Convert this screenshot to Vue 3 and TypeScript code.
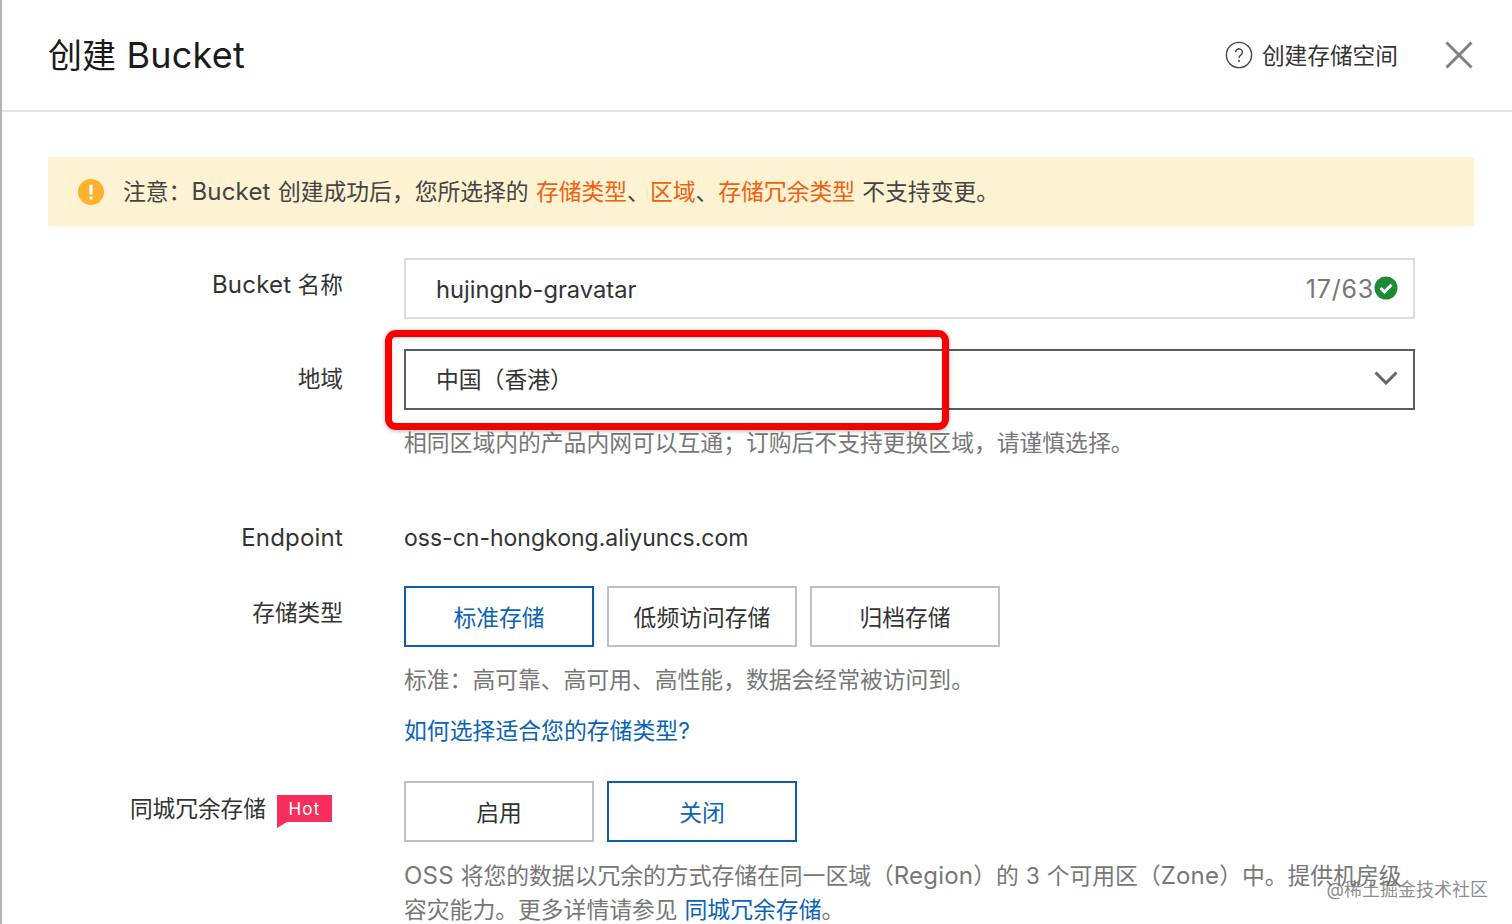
<script setup lang="ts">
const storageTypes = [
  { label: '标准存储', active: true },
  { label: '低频访问存储', active: false },
  { label: '归档存储', active: false },
]
const redundancy = [
  { label: '启用', active: false },
  { label: '关闭', active: true },
]
</script>

<template>
  <div class="page">
    <header class="head">
      <h1 class="title">创建 <span class="title-lat">Bucket</span></h1>
      <div class="head-actions">
        <a class="help">
          <svg class="help-icon" viewBox="0 0 28 28" width="28" height="28">
            <circle cx="14" cy="14" r="12.6" fill="none" stroke="#444" stroke-width="1.4" />
            <path d="M10.6 11.2a3.4 3.4 0 1 1 5.2 2.9c-1.2.8-1.8 1.4-1.8 2.9" fill="none" stroke="#444" stroke-width="1.4" />
            <circle cx="14" cy="20" r="1" fill="#444" />
          </svg>
          <span class="help-text">创建存储空间</span>
        </a>
        <svg class="close" viewBox="0 0 28 28" width="28" height="28">
          <path d="M1.5 1.5 26.5 26.5M26.5 1.5 1.5 26.5" stroke="#808080" stroke-width="3" fill="none" />
        </svg>
      </div>
    </header>

    <section class="body">
      <div class="alert">
        <svg class="alert-icon" viewBox="0 0 26 26" width="26" height="26">
          <circle cx="13" cy="13" r="13" fill="#ffb02e" />
          <rect x="11.4" y="5.5" width="3.2" height="10" rx="1.2" fill="#fff" />
          <circle cx="13" cy="19" r="1.8" fill="#fff" />
        </svg>
        <p class="alert-text">注意：<span class="lat">Bucket</span> 创建成功后，您所选择的 <em>存储类型</em>、<em>区域</em>、<em>存储冗余类型</em> 不支持变更。</p>
      </div>

      <div class="row row-name">
        <label class="label"><span class="lat">Bucket</span> 名称</label>
        <div class="input">
          <span class="value">hujingnb-gravatar</span>
          <span class="count">17/63</span>
          <svg class="ok" viewBox="0 0 24 24" width="24" height="24">
            <circle cx="12" cy="12" r="11.5" fill="#1e8a36" />
            <path d="M6.5 12.2 10.5 16 17.5 8.8" fill="none" stroke="#fff" stroke-width="3" />
          </svg>
        </div>
      </div>

      <div class="row row-region">
        <label class="label">地域</label>
        <div class="region-col">
          <div class="select">
            <span class="select-value">中国（香港）</span>
            <svg class="chev" viewBox="0 0 24 14" width="24" height="14">
              <path d="M1.5 1.5 12 12 22.5 1.5" fill="none" stroke="#666" stroke-width="3" />
            </svg>
          </div>
          <p class="hint hint-region">相同区域内的产品内网可以互通；订购后不支持更换区域，请谨慎选择。</p>
        </div>
      </div>

      <div class="row row-endpoint">
        <label class="label"><span class="lat">Endpoint</span></label>
        <div class="endpoint">oss-cn-hongkong.aliyuncs.com</div>
      </div>

      <div class="row row-type">
        <label class="label">存储类型</label>
        <div>
          <div class="options">
            <button v-for="o in storageTypes" :key="o.label" class="opt" :class="{ on: o.active }">{{ o.label }}</button>
          </div>
          <p class="hint hint-type">标准：高可靠、高可用、高性能，数据会经常被访问到。</p>
          <a class="link">如何选择适合您的存储类型?</a>
        </div>
      </div>

      <div class="row row-redundancy">
        <label class="label label-hot">同城冗余存储<span class="hot">Hot</span></label>
        <div>
          <div class="options">
            <button v-for="o in redundancy" :key="o.label" class="opt" :class="{ on: o.active }">{{ o.label }}</button>
          </div>
          <p class="hint hint-red"><span class="lat">OSS</span> 将您的数据以冗余的方式存储在同一区域（<span class="lat">Region</span>）的 3 个可用区（<span class="lat">Zone</span>）中。提供机房级<br />容灾能力。更多详情请参见 <a class="link inline">同城冗余存储</a>。</p>
        </div>
      </div>
    </section>

    <div class="marker"></div>
    <div class="watermark">@稀土掘金技术社区</div>
  </div>
</template>

<style scoped>
.page {
  position: relative;
  width: 1512px;
  height: 924px;
  box-sizing: border-box;
  overflow: hidden;
  background: #fff;
  border-left: 2px solid #b5b5b5;
  font-family: Inter, "Noto Sans CJK SC", sans-serif;
  color: #333;
}
.lat {
  font-size: 24px;
  letter-spacing: 0.2px;
}
.head {
  height: 110px;
  box-sizing: content-box;
  border-bottom: 2px solid #e4e4e4;
  display: flex;
  align-items: center;
  justify-content: space-between;
  padding: 0 39px 0 46px;
}
.title {
  margin: 0;
  font-size: 34px;
  font-weight: 400;
  line-height: 48px;
  color: #1a1a1a;
  word-spacing: 1px;
}
.title-lat {
  font-size: 36px;
  letter-spacing: 0.2px;
}
.head-actions {
  display: flex;
  align-items: center;
  gap: 47px;
}
.help {
  display: flex;
  align-items: center;
  gap: 9px;
  font-size: 22.7px;
  color: #333;
}
.help-text {
  margin-bottom: 2px;
}
.body {
  padding: 45px 38px 0 46px;
}
.alert {
  height: 69px;
  background: #fdf3d2;
  display: flex;
  align-items: center;
  padding-left: 30px;
  gap: 19px;
}
.alert-text {
  margin: 0;
  font-size: 22.8px;
  line-height: 34px;
  color: #444;
  white-space: nowrap;
  word-spacing: 0.8px;
}
.alert-text em {
  font-style: normal;
  color: #f0600e;
}
.row {
  display: grid;
  grid-template-columns: 295px 1011px;
  column-gap: 61px;
}
.label {
  text-align: right;
  font-size: 22.7px;
  color: #333;
  line-height: 32px;
  white-space: nowrap;
}
.row-name {
  margin-top: 32px;
}
.row-name .label {
  padding-top: 11px;
}
.input {
  height: 61px;
  box-sizing: border-box;
  border: 2px solid #dcdcdc;
  display: flex;
  align-items: center;
  padding: 0 15px 0 30px;
}
.value {
  flex: 1;
  font-size: 23.7px;
  color: #333;
  margin-top: 2px;
}
.count {
  font-size: 25px;
  color: #777;
  letter-spacing: 0.8px;
}
.ok {
  margin-bottom: 2px;
}
.row-region {
  margin-top: 30px;
}
.row-region .label {
  padding-top: 14px;
}
.select {
  height: 61px;
  box-sizing: border-box;
  border: 2px solid #5c5c5c;
  display: flex;
  align-items: center;
  justify-content: space-between;
  padding: 0 15px 0 30px;
}
.select-value {
  font-size: 22.8px;
  color: #333;
  margin-bottom: 2px;
}
.chev {
  margin-bottom: 3px;
}
.hint {
  margin: 0;
  font-size: 22.8px;
  color: #777;
  line-height: 34px;
  white-space: nowrap;
  word-spacing: 0.5px;
}
.hint-region {
  margin-top: 16px;
}
.row-endpoint {
  margin-top: 61px;
  line-height: 34px;
}
.row-endpoint .label {
  line-height: 34px;
}
.endpoint {
  font-size: 23px;
  color: #333;
}
.row-type {
  margin-top: 31px;
}
.row-type .label {
  padding-top: 11px;
}
.options {
  display: flex;
  gap: 13px;
}
.opt {
  width: 190px;
  height: 61px;
  box-sizing: border-box;
  background: #fff;
  border: 2px solid #c0c0c0;
  font: inherit;
  font-size: 22.8px;
  color: #333;
  padding: 0 0 1px;
}
.opt.on {
  border-color: #0a5eb0;
  color: #0a63b5;
}
.hint-type {
  margin-top: 16px;
}
.link {
  display: block;
  font-size: 22.85px;
  line-height: 34px;
  color: #0a63b5;
  margin-top: 17px;
}
.link.inline {
  display: inline;
  margin: 0;
}
.row-redundancy {
  margin-top: 33px;
}
.label-hot {
  display: flex;
  justify-content: flex-end;
  align-items: flex-start;
  padding-top: 12px;
  gap: 11px;
  transform: translateX(-11px);
}
.hot {
  position: relative;
  width: 55px;
  height: 27px;
  background: #f72f5e;
  color: #fff;
  font-size: 17px;
  line-height: 28px;
  text-align: center;
  letter-spacing: 1.2px;
  margin-top: 2px;
}
.hot::after {
  content: "";
  position: absolute;
  left: 0;
  top: 27px;
  border-top: 6px solid #f72f5e;
  border-right: 10px solid transparent;
}
.hint-red {
  margin-top: 17px;
}
.marker {
  position: absolute;
  left: 383px;
  top: 330px;
  width: 564px;
  height: 100px;
  box-sizing: border-box;
  border: 7px solid #f80000;
  border-radius: 11px;
  box-shadow: 0 1px 4px rgba(0, 0, 0, 0.3), inset 0 1px 3px rgba(0, 0, 0, 0.2);
}
.watermark {
  position: absolute;
  right: 24px;
  top: 877px;
  font-size: 18px;
  line-height: 26px;
  color: rgba(110, 110, 110, 0.8);
  white-space: nowrap;
}
</style>
